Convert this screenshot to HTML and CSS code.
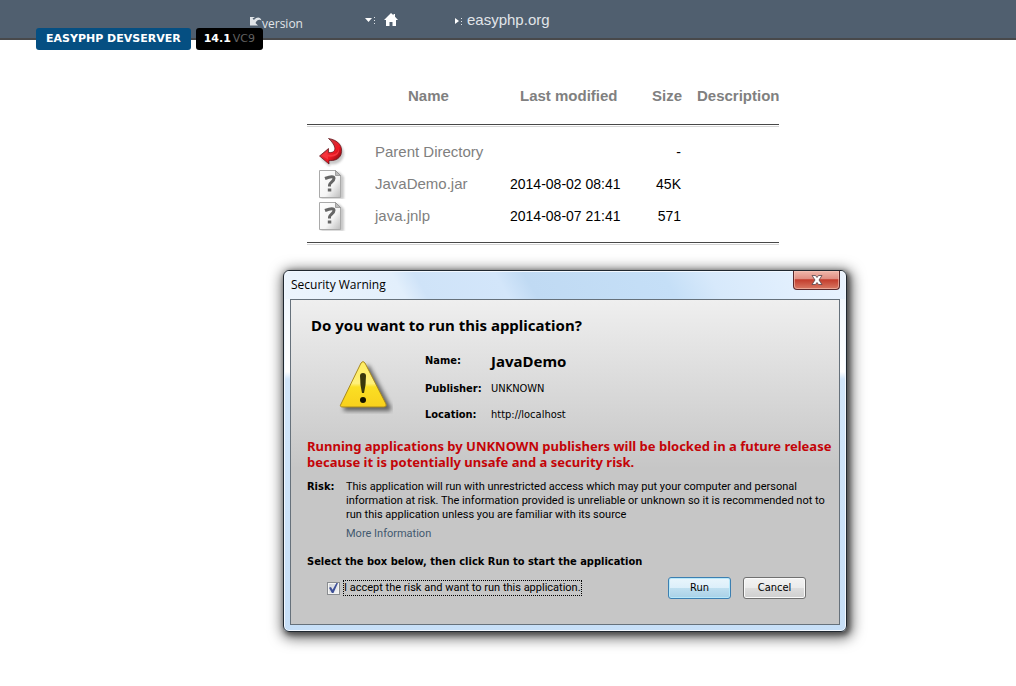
FILE: index.html
```html
<!DOCTYPE html>
<html lang="en">
<head>
<meta charset="utf-8">
<title>EasyPHP DevServer</title>
<link rel="stylesheet" href="styles.css">
</head>
<body>
<header class="topbar">
  <span class="version"><svg class="version-arrow" viewBox="0 0 13 11" aria-hidden="true"><path d="M1 1v8.500h8L6.500 7C8 4 10 3 12.500 4.500 11.500 1 8 0 5 4L3.500 2.500 6 1z" fill="#e0e4e8"/></svg>version</span>
  <a class="home" href="#" aria-label="Home">
    <svg width="11" height="9" viewBox="0 0 11 9" aria-hidden="true"><path d="M0 3h7L3.500 7z" fill="#fff"/><path d="M9 2h1v1H9zM9 5h1v1H9zM9 8h1v1H9z" fill="#dde2e6"/></svg>
    <svg width="14" height="13" viewBox="0 0 14 13" aria-hidden="true"><path d="M7 0l2.500 2.300V1H11v2.700L14 7h-2v6H8.500V9h-3v4H2V7H0z" fill="#fff"/></svg>
  </a>
  <a class="site" href="#"><svg width="10" height="9" viewBox="0 0 10 9" aria-hidden="true"><path d="M1 2v6l4-3z" fill="#fff"/><path d="M7 2h1v1H7zM7 5h1v1H7zM7 8h1v1H7z" fill="#dde2e6"/></svg>easyphp.org</a>
  <div class="badges">
    <span class="badge badge-name">EASYPHP DEVSERVER</span>
    <span class="badge badge-version">14.1<span class="build">VC9</span></span>
  </div>
</header>

<main class="listing">
  <table class="files">
    <colgroup><col class="col-icon"><col class="col-name"><col class="col-date"><col class="col-size"><col></colgroup>
    <thead>
      <tr><th></th><th><a href="#">Name</a></th><th><a href="#">Last modified</a></th><th><a href="#">Size</a></th><th><a href="#">Description</a></th></tr>
    </thead>
    <tbody>
      <tr>
        <td class="icon"><svg width="30" height="30" viewBox="0 0 30 30" aria-hidden="true"><defs><linearGradient id="red" x1="0" y1="0" x2="1" y2="1"><stop offset="0" stop-color="#777"/><stop offset=".4" stop-color="#d92b35"/><stop offset=".6" stop-color="#f01824"/><stop offset="1" stop-color="#5c0308"/></linearGradient></defs><path class="soft" d="M14 4c11 2 15 10 12 17-3 6-9 7-13 6v3l-9-8 8-7v4c9 0 9-8 2-15z"/><path d="M11.500 1.500c10 1.500 15 8 12.500 16-2 5-7 6.500-12 6v3.500l-9.500-8 9-7.500v4c8 1 9-6 0-14z" fill="url(#red)" stroke="#5a1015" stroke-width=".7"/><path d="M4.500 18.500l6-4.500v3.500c7 1 11-1 11.500-7 1 8-5 10-11 9v3z" fill="#f7343c"/></svg></td>
        <td><a href="#">Parent Directory</a></td><td></td><td class="size">-</td><td></td>
      </tr>
      <tr>
        <td class="icon"><svg width="30" height="30" viewBox="0 0 30 30" aria-hidden="true"><defs><linearGradient id="paper" x1="0" y1="0" x2="1" y2="1"><stop offset="0" stop-color="#fff"/><stop offset=".6" stop-color="#f5f5f5"/><stop offset="1" stop-color="#bbb"/></linearGradient><g id="unknown"><path class="soft" d="M4 3h18l5 5v22H4z"/><path d="M2.500 1.500h16l5 5v22h-21z" fill="url(#paper)" stroke="#aaa"/><path d="M18.500 1.500v5h5z" fill="#bbb" stroke="#888" stroke-width=".7"/><path d="M8 9.500q9-3.500 9 0c0 3-4.500 4-4.500 6.500v1.500" fill="none" stroke="#666" stroke-width="3"/><path d="M10.800 19.500h3.500v3h-3.500z" fill="#666"/></g></defs><use href="#unknown"/></svg></td>
        <td><a href="#">JavaDemo.jar</a></td><td class="date">2014-08-02 08:41</td><td class="size">45K</td><td></td>
      </tr>
      <tr>
        <td class="icon"><svg width="30" height="30" viewBox="0 0 30 30" aria-hidden="true"><use href="#unknown"/></svg></td>
        <td><a href="#">java.jnlp</a></td><td class="date">2014-08-07 21:41</td><td class="size">571</td><td></td>
      </tr>
    </tbody>
  </table>
</main>

<section class="window" role="dialog" aria-labelledby="window-title">
  <div class="titlebar">
    <span class="window-title" id="window-title">Security Warning</span>
    <button class="close" type="button" aria-label="Close"><svg width="12" height="10" viewBox="0 0 12 10" aria-hidden="true"><path d="M1 .5h3.500L6 2.500 7.500.5H11L8 5l3 4.500H7.500L6 7.500 4.500 9.500H1L4 5z" fill="#fff" stroke="#54434a" stroke-width=".8"/></svg></button>
  </div>
  <div class="panel">
    <h1 class="question">Do you want to run this application?</h1>
    <div class="details">
      <svg class="warning" width="56" height="54" viewBox="0 0 56 54" aria-hidden="true"><defs><linearGradient id="yellow" x1="0" y1="0" x2="0" y2="1"><stop offset="0" stop-color="#ffed60"/><stop offset=".48" stop-color="#fff07a"/><stop offset=".56" stop-color="#fbdf24"/><stop offset="1" stop-color="#f8d01c"/></linearGradient></defs><path class="drop" d="M29 6q2-2 4 1l21 40q1 4-3 4H8q-3-1-1-4z"/><path d="M24 3q2-3 4 0l21 41q1 3-2 3H6q-4 0-2-3z" fill="url(#yellow)" stroke="#a98920"/><path d="M23 16q0-3 3-3t3 3q0 9-2 17h-2q-2-8-2-17z" fill="#3a370b"/><circle cx="26" cy="40" r="3" fill="#141300"/></svg>
      <dl class="facts">
        <dt>Name:</dt><dd class="app">JavaDemo</dd>
        <dt>Publisher:</dt><dd>UNKNOWN</dd>
        <dt>Location:</dt><dd>http://localhost</dd>
      </dl>
    </div>
    <p class="alert">Running applications by UNKNOWN publishers will be blocked in a future release<br>because it is potentially unsafe and a security risk.</p>
    <div class="risk">
      <strong>Risk:</strong>
      <div class="risk-text">
        <p>This application will run with unrestricted access which may put your computer and personal<br>information at risk. The information provided is unreliable or unknown so it is recommended not to<br>run this application unless you are familiar with its source</p>
        <a class="more" href="#">More Information</a>
      </div>
    </div>
    <p class="instruction">Select the box below, then click Run to start the application</p>
    <div class="actions">
      <input class="check" type="checkbox" id="accept" checked>
      <label class="accept" for="accept">I accept the risk and want to run this application.</label>
      <div class="buttons">
        <button class="button primary" type="button">Run</button>
        <button class="button" type="button">Cancel</button>
      </div>
    </div>
  </div>
</section>
</body>
</html>
```

FILE: styles.css
```css
* { box-sizing: border-box; }
body {
  margin: 0;
  background: #fff;
  color: #000;
  font: 15px/20px "Liberation Sans", Arial, sans-serif;
}
a { color: inherit; text-decoration: none; }
p, h1, dl, dd { margin: 0; }
button { font: inherit; color: inherit; }

.topbar {
  position: relative;
  display: flex;
  height: 40px;
  padding-left: 249px;
  background: #505f6f;
  border-bottom: 2px solid #48494b;
  color: #e1e5e9;
}
.version {
  display: flex;
  width: 116px;
  padding-top: 14px;
  font: 12px/20px "Open Sans", sans-serif;
}
.version-arrow { width: 13px; height: 11px; margin-top: 2px; }
.home { display: flex; align-items: center; gap: 8px; width: 89px; height: 38px; }
.site { display: flex; align-items: center; gap: 3px; height: 40px; }
.badges { position: absolute; left: 36px; top: 28px; display: flex; gap: 5px; }
.badge {
  padding: 0 10px;
  border-radius: 3px;
  color: #fff;
  font: bold 11px/22px "DejaVu Sans", sans-serif;
}
.badge-name { background: #054f82; }
.badge-version { background: #000; padding: 0 8px; }
.build { margin-left: 2px; color: #606060; font-weight: normal; }

.listing { padding-left: 307px; }
.files { width: 472px; border-spacing: 0; table-layout: fixed; }
.files th, .files td { height: 32px; padding: 0; text-align: left; white-space: nowrap; }
.files a { color: #808080; }
.col-icon { width: 68px; }
.col-name { width: 135px; }
.col-date { width: 127px; }
.col-size { width: 60px; }
.files thead th, .files tbody tr:last-child td {
  background: linear-gradient(#484848 1px, #fff 1px, #fff 2px, #d4d4d4 2px) bottom / 100% 3px no-repeat;
}
.files thead th { height: 87px; padding-top: 24px; }
.files th:nth-child(2) { padding-left: 33px; }
.files th:nth-child(3) { padding-left: 10px; }
.files th:nth-child(4) { padding-left: 15px; }
.files tbody tr:first-child td { height: 41px; padding-top: 9px; }
.files tbody tr:last-child td { height: 45px; padding-bottom: 13px; }
.files .icon { padding-left: 10px; }
.icon svg { display: block; }
.files .date, .files .size { font-size: 14px; }
.files .size { padding-right: 16px; text-align: right; }
.soft { fill: #777; opacity: .4; filter: blur(1px); }

.window {
  position: absolute;
  left: 283px;
  top: 270px;
  width: 564px;
  padding: 0 6px 6px;
  border: 1px solid #202830;
  border-radius: 6px;
  background: linear-gradient(#edf5fd, #fff 28%, #d2e6fa 30%, #c7dff7);
  box-shadow: inset 0 0 0 1px #f2f8ff, 2px 2px 5px 1px #333a, 2px 3px 14px 3px #0009;
  font: 11px/14px Tahoma, "DejaVu Sans Condensed", sans-serif;
}
.titlebar {
  display: flex;
  justify-content: space-between;
  margin: 0 -5px;
  height: 28px;
  padding-left: 6px;
  padding-right: 5px;
  border-radius: 5px 5px 0 0;
  background: linear-gradient(60deg, #edf5fd 0, #e2effc 21%, #cfe3f8 25%, #d3e6fa 39%, #c0daf3 44%, #c5dff7 68%, #d7e9fb 76%, #eaf4ff);
  box-shadow: inset 0 1px 0 #f2f8ff;
}
.window-title { font: 12px/27px "Open Sans", sans-serif; }
.close {
  width: 47px;
  height: 19px;
  padding: 0;
  display: grid;
  place-items: center;
  border: 1px solid #5a282b;
  border-top: 0;
  border-radius: 0 0 4px 4px;
  background: linear-gradient(#f0b8ac, #df8c80 45%, #c33c2c 48%, #d97964);
  box-shadow: inset 0 0 0 1px #f7c7b999;
}
.panel {
  padding: 15px 18px 25px 16px;
  border: 1px solid #66717b;
  background: linear-gradient(#efefef, #c6c6c6 52%);
}
.question { margin-left: 4px; font: bold 15px/20px "Noto Sans", sans-serif; }
.details { display: grid; grid-template-columns: 118px 1fr; margin-top: 11px; }
.warning { margin: 14px 0 0 30px; }
.drop { fill: #333; opacity: .7; filter: blur(2px); }
.facts { display: grid; grid-template-columns: 66px 1fr; grid-template-rows: 30px 26px 26px; align-items: center; }
.facts dt { font-weight: bold; }
.facts .app { font: bold 15px/20px "Noto Sans", sans-serif; }
.alert { margin-top: 10px; color: #c40408; font: bold 13px/16px "Noto Sans", sans-serif; white-space: nowrap; }
.risk { display: grid; grid-template-columns: 39px 1fr; margin-top: 10px; white-space: nowrap; }
.risk-text { font-family: Roboto, sans-serif; }
.more { display: block; margin-top: 5px; color: #42596f; }
.instruction { margin-top: 14px; font-weight: bold; }
.actions { display: flex; align-items: center; margin-top: 8px; }
.check {
  appearance: none;
  width: 13px;
  height: 13px;
  margin: 0 4px 0 20px;
  border: 1px solid #8a8d90;
  background: linear-gradient(135deg, #cdd1d6, #f7f7f7);
  box-shadow: inset 0 0 0 1px #f4f4f4;
  display: grid;
  place-items: center;
}
.check:checked::before {
  content: "";
  width: 9px;
  height: 10px;
  background: #3e5098;
  clip-path: polygon(0 48%, 22% 40%, 40% 68%, 82% 0, 100% 0, 50% 100%, 32% 100%);
}
.accept { outline: 1px dotted #000; font-family: Roboto, sans-serif; white-space: nowrap; }
.buttons { display: flex; gap: 12px; margin-left: auto; margin-right: 15px; }
.button {
  width: 63px;
  height: 22px;
  padding: 0;
  border: 1px solid #707070;
  border-radius: 3px;
  background: linear-gradient(#f3f3f3, #ebebeb 48%, #dddddd 50%, #cfcfcf);
  box-shadow: inset 0 0 0 1px #fafafa;
}
.primary {
  border-color: #3c7fb1;
  background: linear-gradient(#e9f5fc, #dceffa 48%, #bfdff0 50%, #a9d1e7);
  box-shadow: inset 0 0 0 1px #b7e8fa;
}
```
